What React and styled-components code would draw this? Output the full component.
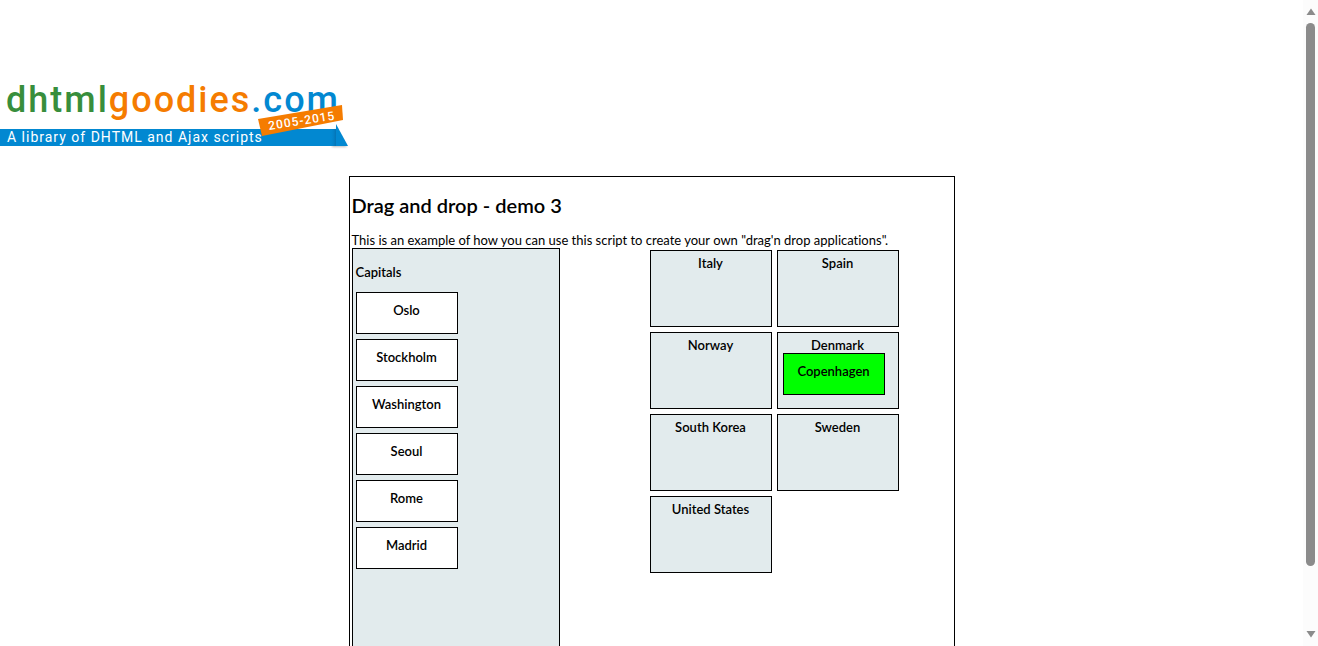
import React from "react";
import styled, { createGlobalStyle } from "styled-components";

const capitals = ["Oslo", "Stockholm", "Washington", "Seoul", "Rome", "Madrid"];
const countries = [
  { name: "Italy" },
  { name: "Spain" },
  { name: "Norway" },
  { name: "Denmark", capital: "Copenhagen" },
  { name: "South Korea" },
  { name: "Sweden" },
  { name: "United States" },
];

const GlobalStyle = createGlobalStyle`
  *, *::before, *::after { box-sizing: border-box; }
  body {
    margin: 0;
    background: #fff;
    color: #000;
    font-family: "Trebuchet MS", Lato, sans-serif;
    font-size: 13px;
    line-height: 16px;
    font-variant-ligatures: none;
  }
`;

const Window = styled.div`
  display: flex;
  height: 100vh;
  overflow: hidden;
`;

const Page = styled.div`
  flex: 1;
  min-width: 0;
  overflow: hidden;
`;

const Header = styled.header`
  padding-top: 76px;
`;

const HomeLink = styled.a`
  display: block;
  width: fit-content;
`;

const Logo = styled.svg`
  display: block;
  font-family: Roboto, sans-serif;
`;

const Wordmark = styled.text`
  font-size: 36px;
  font-weight: 500;
  letter-spacing: 2px;
`;

const Tagline = styled.text`
  font-size: 14px;
  font-weight: 400;
  letter-spacing: 1px;
  fill: #fff;
`;

const Years = styled.text`
  font-size: 12px;
  font-weight: 500;
  letter-spacing: 1px;
  fill: #fff;
`;

const Container = styled.main`
  width: 606px;
  max-width: 100%;
  margin: 24px auto 0;
  padding: 0 2px;
  border: 1px solid #000;
`;

const Title = styled.h1`
  margin: 16px 0 15px;
  font-size: 20px;
  line-height: 24px;
  font-weight: 600;
`;

const Intro = styled.p`
  margin: 0;
`;

const Board = styled.div`
  display: flex;
  justify-content: space-between;
  align-items: flex-start;
`;

const CapitalPanel = styled.section`
  width: 208px;
  min-height: 500px;
  padding: 0 3px;
  border: 1px solid #000;
  background: #e2ebed;
`;

const PanelTitle = styled.h2`
  margin: 15px 0 12px;
  font-size: 13px;
  line-height: 16px;
  font-weight: 600;
`;

const CapitalList = styled.div`
  display: grid;
  justify-items: start;
  gap: 5px;
`;

const Capital = styled.div`
  width: 102px;
  height: 42px;
  padding-top: 9px;
  border: 1px solid #000;
  background: ${({ $correct }) => ($correct ? "#00ff00" : "#fff")};
  font-weight: 600;
  text-align: center;
  cursor: pointer;
`;

const CountryGrid = styled.section`
  display: grid;
  grid-template-columns: repeat(2, 122px);
  gap: 5px;
  padding: 2px 53px 0 0;
`;

const Country = styled.div`
  height: 77px;
  padding: 4px 5px 0;
  border: 1px solid #000;
  background: #e2ebed;
  font-weight: 600;
  text-align: center;
`;

const Scrollbar = styled.div`
  display: flex;
  flex-direction: column;
  align-items: center;
  width: 15px;
  padding: 8px 0;
  background: #fcfcfc;
`;

const ScrollButton = styled.button`
  display: block;
  width: 15px;
  height: 7px;
  padding: 0;
  border: 0;
  background: none;
`;

const Arrow = styled.svg`
  display: block;
  margin: 0 auto;
`;

const Track = styled.div`
  flex: 1;
  width: 9px;
  padding: 8px 0;
`;

const Thumb = styled.div`
  height: calc(100% - 57px);
  border-radius: 5px;
  background: #8b8b8b;
`;

function SiteLogo() {
  return (
    <Logo width="350" height="76" viewBox="0 76 350 76" role="img" aria-label="dhtmlgoodies.com">
      <defs>
        <linearGradient id="foldShade" x1="0" x2="1" y1="0" y2="0">
          <stop offset="0" stopColor="#0288d1" stopOpacity="0" />
          <stop offset="1" stopColor="#055e98" stopOpacity="0.5" />
        </linearGradient>
        <filter id="foldBlur" x="-20%" y="-20%" width="140%" height="150%">
          <feGaussianBlur stdDeviation="1" />
        </filter>
      </defs>
      <Wordmark x="6" y="112">
        <tspan fill="#388e3c">dhtml</tspan>
        <tspan fill="#f57c00">goodies</tspan>
        <tspan fill="#0288d1">.com</tspan>
      </Wordmark>
      <path d="M332 140 L336 128 L347 147 H332Z" fill="#000" opacity="0.25" filter="url(#foldBlur)" />
      <path d="M0 129H336V146H0Z" fill="#0288d1" />
      <path d="M330 129H336V146H330Z" fill="url(#foldShade)" />
      <path d="M336 124L348 146H336Z" fill="#0288d1" />
      <Tagline x="7" y="142">A library of DHTML and Ajax scripts</Tagline>
      <path d="M258 119L342 105L343 120L262 136Z" fill="#f57c00" />
      <Years transform="translate(269 130) rotate(-9)">2005-2015</Years>
    </Logo>
  );
}

export default function App() {
  return (
    <Window>
      <GlobalStyle />
      <Page>
        <Header>
          <HomeLink href="#home">
            <SiteLogo />
          </HomeLink>
        </Header>
        <Container>
          <Title>Drag and drop - demo 3</Title>
          <Intro>
            This is an example of how you can use this script to create your own "drag'n drop applications".
          </Intro>
          <Board>
            <CapitalPanel>
              <PanelTitle>Capitals</PanelTitle>
              <CapitalList>
                {capitals.map((name) => (
                  <Capital key={name} draggable>{name}</Capital>
                ))}
              </CapitalList>
            </CapitalPanel>
            <CountryGrid>
              {countries.map(({ name, capital }) => (
                <Country key={name}>
                  {name}
                  {capital && <Capital $correct draggable>{capital}</Capital>}
                </Country>
              ))}
            </CountryGrid>
          </Board>
        </Container>
      </Page>
      <Scrollbar>
        <ScrollButton aria-label="Scroll up">
          <Arrow width="10" height="7" viewBox="0 0 10 7"><path d="M5 0.5L9.5 7H0.5Z" fill="#8b8b8b" /></Arrow>
        </ScrollButton>
        <Track><Thumb /></Track>
        <ScrollButton aria-label="Scroll down">
          <Arrow width="10" height="7" viewBox="0 0 10 7"><path d="M0.5 0H9.5L5 6.5Z" fill="#8b8b8b" /></Arrow>
        </ScrollButton>
      </Scrollbar>
    </Window>
  );
}
